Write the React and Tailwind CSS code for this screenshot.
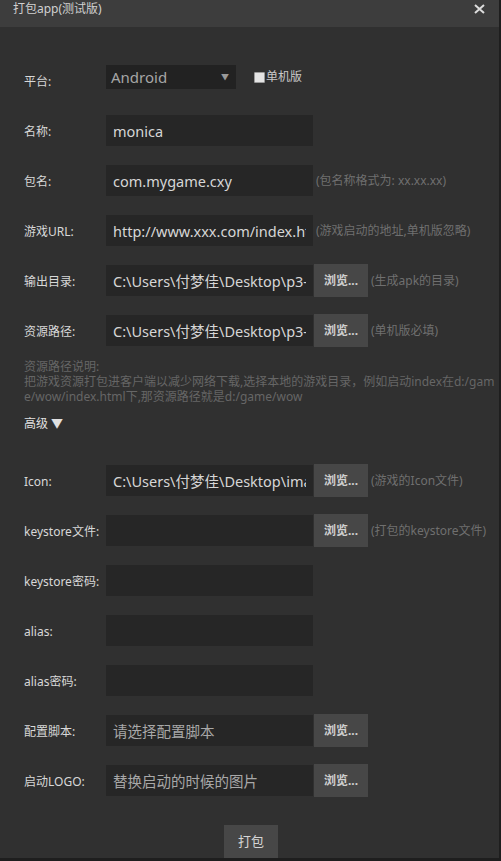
import React from 'react';

const font = "font-['Noto_Sans','Noto_Sans_CJK_SC',sans-serif]";

const Row = ({ label, value, placeholder, browse, hint, dim }) => (
  <div className="flex items-center h-[31px] mt-[19px]">
    <div className="w-[82px] text-[12px] text-[#d8d8d8] whitespace-nowrap pt-[3px]">{label}</div>
    <input
      readOnly
      defaultValue={value}
      placeholder={placeholder}
      className={`w-[207px] h-[31px] bg-[#262626] px-[7px] text-[14.5px] outline-none border-0 ${dim ? 'text-[#b0b0b0]' : 'text-[#d6d6d6]'} placeholder-[#a8a8a8]`}
    />
    {browse && (
      <button className="w-[54px] h-[33px] ml-[1px] shrink-0 bg-[#474747] text-[12px] font-bold text-[#cfcfcf]">
        浏览...
      </button>
    )}
    {hint && (
      <span className="ml-[3px] text-[12px] text-[#6f6f6f] whitespace-nowrap">{hint}</span>
    )}
  </div>
);

export default function App() {
  return (
    <div className={`w-[501px] h-[861px] bg-[#1e1e1e] overflow-hidden ${font}`}>
      <div className="w-[499px] h-[858px] bg-[#303030] flex flex-col">
        {/* title bar */}
        <div className="h-[27px] shrink-0 bg-[#3d3d3d] flex items-start justify-between pl-[13px] pr-[14px] pt-[1px]">
          <span className="text-[12px] leading-[16px] text-[#d0d0d0]">打包app(测试版)</span>
          <svg width="11" height="10" viewBox="0 0 11 10" className="mt-[3px]">
            <path d="M1 1 L10 9 M10 1 L1 9" stroke="#dcdcdc" strokeWidth="2" />
          </svg>
        </div>

        <div className="pl-[24px] pt-[38px]">
          {/* platform */}
          <div className="flex items-start h-[31px]">
            <div className="w-[82px] self-center text-[12px] text-[#d8d8d8] pt-[3px]">平台:</div>
            <div className="w-[130px] h-[24px] bg-[#222222] flex items-center justify-between pl-[5px] pr-[7px]">
              <span className="text-[15px] text-[#a6a6a6]">Android</span>
              <span className="text-[8px] text-[#9a9a9a]">▼</span>
            </div>
            <div className="flex items-center ml-[18px] mt-[3px]">
              <span className="w-[11px] h-[11px] bg-[#e4e4e4] border border-[#9a9a9a] rounded-[1px]"></span>
              <span className="ml-[1px] text-[12px] text-[#c8c8c8]">单机版</span>
            </div>
          </div>

          <Row label="名称:" value="monica" />
          <Row label="包名:" value="com.mygame.cxy" hint="(包名称格式为: xx.xx.xx)" />
          <Row label="游戏URL:" value="http://www.xxx.com/index.html" hint="(游戏启动的地址,单机版忽略)" />
          <Row label="输出目录:" value="C:\Users\付梦佳\Desktop\p3-build" browse hint="(生成apk的目录)" />
          <Row label="资源路径:" value="C:\Users\付梦佳\Desktop\p3-build" browse hint="(单机版必填)" />

          <div className="mt-[13px] text-[12px] leading-[15px] text-[#666666] whitespace-nowrap">
            <div>资源路径说明:</div>
            <div>把游戏资源打包进客户端以减少网络下载,选择本地的游戏目录，例如启动index在d:/gam</div>
            <div>e/wow/index.html下,那资源路径就是d:/game/wow</div>
          </div>

          <div className="mt-[12px] text-[12px] leading-[15px] text-[#e0e0e0]">高级 ▼</div>

          <div className="mt-[34px]">
            <Row label="Icon:" value="C:\Users\付梦佳\Desktop\image.png" browse hint="(游戏的Icon文件)" />
            <Row label="keystore文件:" value="" browse hint="(打包的keystore文件)" />
            <Row label="keystore密码:" value="" />
            <Row label="alias:" value="" />
            <Row label="alias密码:" value="" />
            <Row label="配置脚本:" value="" placeholder="请选择配置脚本" browse />
            <Row label="启动LOGO:" value="" placeholder="替换启动的时候的图片" browse />
          </div>
        </div>

        <div className="flex justify-center mt-[29px] pl-[3px]">
          <button className="w-[54px] h-[33px] bg-[#474747] text-[13px] text-[#d6d6d6]">打包</button>
        </div>
      </div>
    </div>
  );
}
